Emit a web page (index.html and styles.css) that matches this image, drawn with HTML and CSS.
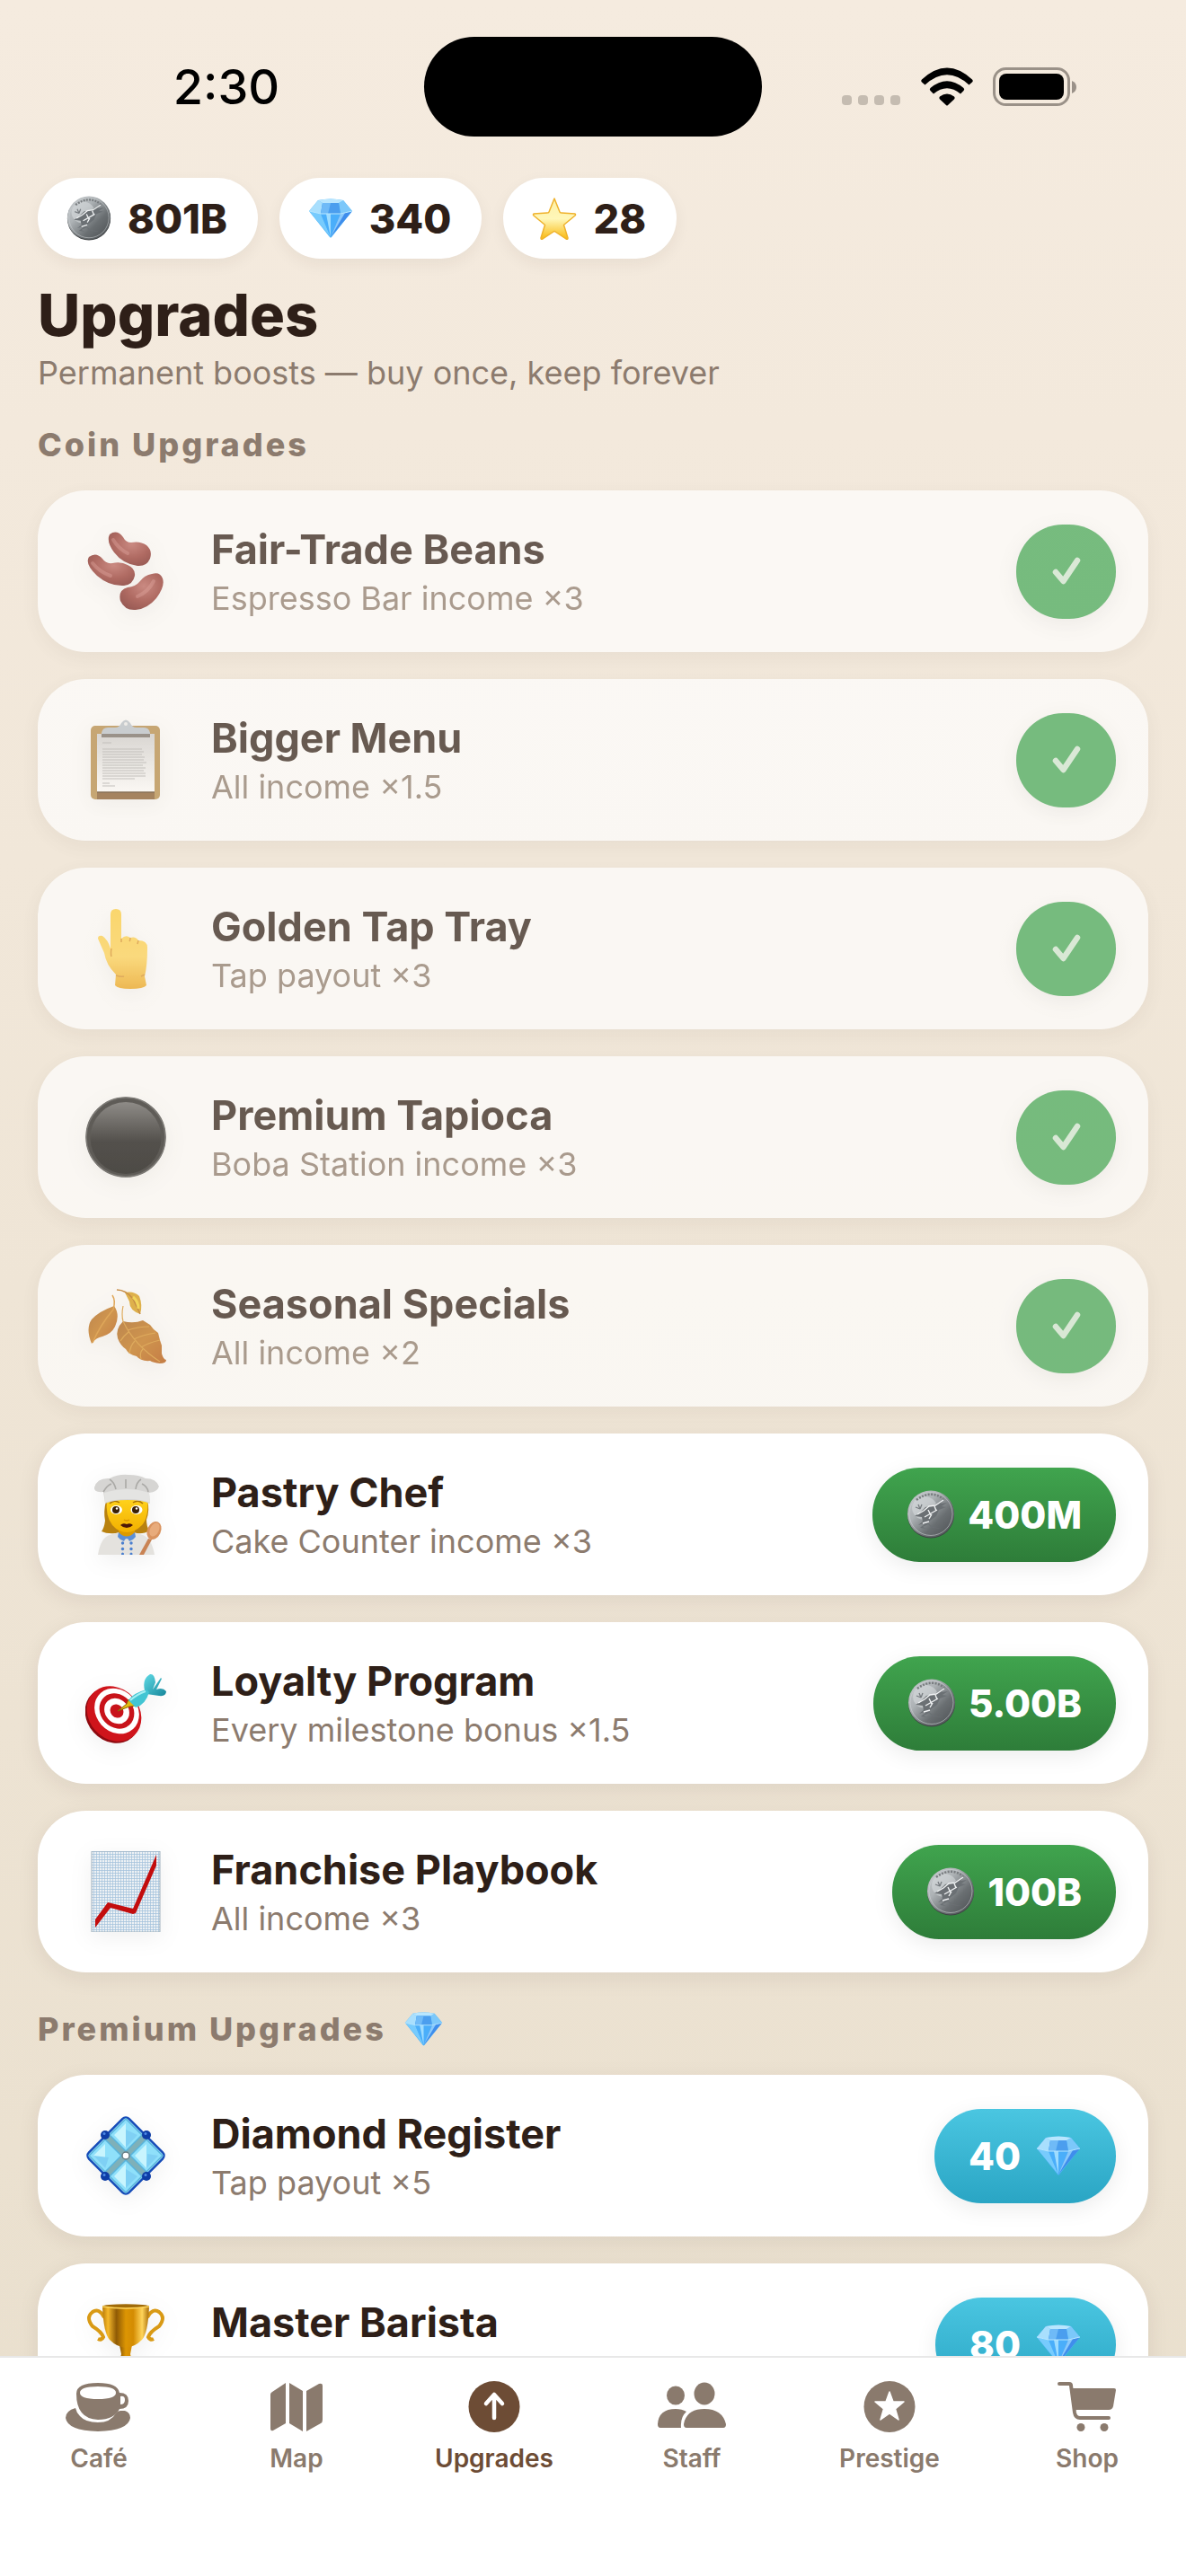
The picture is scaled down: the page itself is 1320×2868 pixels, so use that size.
FILE: index.html
```html
<!DOCTYPE html>
<html lang="en">
<head>
    <meta charset="UTF-8">
    <meta name="viewport" content="width=device-width, initial-scale=1.0">
    <title>Upgrades</title>
    <link rel="stylesheet" href="styles.css">
</head>
<body>
    <!-- shared icons -->
    <svg class="defs" aria-hidden="true">
        <defs>
            <linearGradient id="silver" x1="0" y1="0" x2="1" y2="1">
                <stop offset="0" stop-color="#c9cdd0"/>
                <stop offset="0.35" stop-color="#adb2b5"/>
                <stop offset="0.65" stop-color="#6a6f72"/>
                <stop offset="1" stop-color="#4a4e51"/>
            </linearGradient>
            <linearGradient id="starFill" x1="0" y1="0" x2="0" y2="1">
                <stop offset="0" stop-color="#fdf0a8"/>
                <stop offset="0.5" stop-color="#fff7b8"/>
                <stop offset="1" stop-color="#f9b90f"/>
            </linearGradient>
            <radialGradient id="bean" cx="0.55" cy="0.35" r="0.7">
                <stop offset="0" stop-color="#b9625c"/>
                <stop offset="0.6" stop-color="#93352f"/>
                <stop offset="1" stop-color="#74201d"/>
            </radialGradient>
            <linearGradient id="skin" x1="0" y1="0" x2="0" y2="1">
                <stop offset="0" stop-color="#ffd040"/>
                <stop offset="0.6" stop-color="#ffd457"/>
                <stop offset="1" stop-color="#eca51c"/>
            </linearGradient>
            <linearGradient id="pearl" x1="0" y1="0" x2="0" y2="1">
                <stop offset="0" stop-color="#666"/>
                <stop offset="0.55" stop-color="#121212"/>
                <stop offset="1" stop-color="#090909"/>
            </linearGradient>
            <linearGradient id="leaf" x1="0" y1="0" x2="1" y2="1">
                <stop offset="0" stop-color="#a85f14"/>
                <stop offset="0.5" stop-color="#c27316"/>
                <stop offset="1" stop-color="#b45209"/>
            </linearGradient>
            <linearGradient id="face" x1="0" y1="0" x2="0" y2="1">
                <stop offset="0" stop-color="#ffd21c"/>
                <stop offset="1" stop-color="#f2b000"/>
            </linearGradient>
            <linearGradient id="gold" x1="0" y1="0" x2="1" y2="0">
                <stop offset="0" stop-color="#b87a08"/>
                <stop offset="0.12" stop-color="#f6b92a"/>
                <stop offset="0.3" stop-color="#8f5a05"/>
                <stop offset="0.5" stop-color="#dc9503"/>
                <stop offset="0.66" stop-color="#d48c02"/>
                <stop offset="0.85" stop-color="#ffd45a"/>
                <stop offset="1" stop-color="#a86c06"/>
            </linearGradient>
            <linearGradient id="paper" x1="0" y1="0" x2="0" y2="1">
                <stop offset="0" stop-color="#cfcfcf"/>
                <stop offset="1" stop-color="#fff"/>
            </linearGradient>
            <linearGradient id="fletch" x1="0" y1="0" x2="1" y2="1">
                <stop offset="0" stop-color="#5fdbe6"/>
                <stop offset="1" stop-color="#17869a"/>
            </linearGradient>
            <pattern id="grid" width="3" height="3" patternUnits="userSpaceOnUse">
                <rect width="3" height="3" fill="#edf1f4"/>
                <path d="M0 0H3M0 0V3" stroke="#a3c2dc" stroke-width="1.4"/>
            </pattern>
            <symbol id="coin" viewBox="0 0 54 54">
                <circle cx="27" cy="27.500" r="26" fill="#3f4244"/>
                <circle cx="27" cy="26.500" r="26" fill="url(#silver)"/>
                <circle cx="27" cy="26.500" r="24" fill="none" stroke="#cfd3d5" stroke-width="0.8" opacity="0.7"/>
                <ellipse cx="20" cy="20" rx="14" ry="13" fill="#dde1e4" opacity="0.5"/>
                <path d="M11 11Q27 -1 41 10" fill="none" stroke="#777b7e" stroke-width="2.500" stroke-dasharray="2 1.500"/>
                <path d="M9 29l5-3 7-7 9-2 12-7-4 5 7-1-6 4 5 1-8 3-3 7-7 5-2 3 5 4 11 2-12-1-4-4-6 3 4 2-7-1 5-4-1-1-6 2 5-4-1-5z" fill="#6b7074"/>
                <path d="M12 27l7-4 6-5 7-1 9-6M20 30l7-4 7-4M18 37l7-2M24 22l3 6M31 18l2 5M28 27l-3 5" fill="none" stroke="#f0f2f3" stroke-width="1.400"/>
                <path d="M13 16l2 5M10 19l5 2M17 16l-2 5" stroke="#777c80" stroke-width="1.300"/>
            </symbol>
            <symbol id="gem" viewBox="0 0 50 44">
                <path d="M11 2Q25-1 39 2L49 14 26 43Q25 44 24 43L1 14z" fill="#4fb4f7"/>
                <path d="M11 2L1 14l13 3 2-12z" fill="#a9dffd"/>
                <path d="M39 2l10 12-13 3-2-12z" fill="#7cc8fa"/>
                <path d="M11 2Q25-1 39 2l-5 3H16z" fill="#b9e6fe"/>
                <path d="M16 5h18l2 12H14z" fill="#4b9eee"/>
                <path d="M16 5h9l-3 12h-8z" fill="#6fbaf7"/>
                <path d="M1 14l13 3 11 26z" fill="#77cbfd"/>
                <path d="M14 17h22L25 43z" fill="#4aaefa"/>
                <path d="M20 17h5v26z" fill="#9edcff"/>
                <path d="M49 14l-13 3-11 26z" fill="#3f8dec"/>
                <path d="M36 17l5-1-16 27z" fill="#8ac9fb"/>
                <path d="M1 14l13 3h22l13-3" fill="none" stroke="#b8e7ff" stroke-width="1"/>
            </symbol>
            <symbol id="check" viewBox="0 0 32 32">
                <path d="M4 17l8.500 10L28 4" fill="none" stroke="#fff" stroke-width="6.500" stroke-linecap="round" stroke-linejoin="round"/>
            </symbol>
        </defs>
    </svg>

    <div class="status-bar">
        <span class="clock">2:30</span>
        <span class="island"></span>
        <svg class="signals" viewBox="0 0 262 44" aria-hidden="true">
            <g fill="#c5bcb1">
                <rect x="0" y="31" width="11" height="11" rx="4"/>
                <rect x="18" y="31" width="11" height="11" rx="4"/>
                <rect x="36" y="31" width="11" height="11" rx="4"/>
                <rect x="54" y="31" width="11" height="11" rx="4"/>
            </g>
            <path d="M89 13.500Q117-12.500 145 13.500Q146.500 15 145 16.500L141.500 19.500Q117-3 92.500 19.500L89 16.500Q87.500 15 89 13.500z"/>
            <path d="M98.500 23Q117 7.500 135.500 23Q137 24.500 135.500 26L132 29.500Q117 17 102 29.500L98.500 26Q97 24.500 98.500 23z"/>
            <path d="M109 32.500Q117 26.500 125 32.500Q126.500 34 125 35.500L118 42Q117 43 116 42L109 35.500Q107.500 34 109 32.500z"/>
            <rect x="169.500" y="1.500" width="83" height="40" rx="13" fill="none" stroke="#9a9188" stroke-width="3"/>
            <rect x="175" y="7" width="72" height="29" rx="8"/>
            <path d="M256 15q5 2 5 7t-5 7z" fill="#9a9188"/>
        </svg>
    </div>

    <main class="screen">
        <div class="wallet">
            <div class="pill"><svg class="pill-icon" aria-hidden="true"><use href="#coin"/></svg>801B</div>
            <div class="pill"><svg class="pill-icon" aria-hidden="true"><use href="#gem"/></svg>340</div>
            <div class="pill">
                <svg class="pill-icon" viewBox="0 0 50 50" aria-hidden="true">
                    <path d="M25 3l6 15q0 1 2 1l15 1q1 1 0 2L36 32q-1 1 0 2l4 13q0 2-2 1L26 40q-1-1-2 0L12 48q-2 1-2-1l4-13q1-1 0-2L2 22q-1-1 0-2l15-1q2 0 2-1z" fill="url(#starFill)" stroke="#efb22c" stroke-width="1.500" stroke-linejoin="round"/>
                </svg>28
            </div>
        </div>

        <h1 class="title">Upgrades</h1>
        <p class="subtitle">Permanent boosts — buy once, keep forever</p>

        <section class="section">
            <h2 class="section-title">Coin Upgrades</h2>
            <div class="upgrade-list">
                <article class="card owned">
                    <svg class="emoji" viewBox="0 0 90 90" aria-hidden="true">
                        <path d="M27 4q8-6 15 3 3 6 9 6 10-2 17 3 7 6 4 15-4 9-14 8-16-2-26-15-9-12-5-20z" fill="url(#bean)"/>
                        <path d="M4 29q8-6 15 2 4 6 11 5 10-2 17 2 9 4 8 12-2 10-12 11-16 1-30-11Q-1 37 4 29z" fill="url(#bean)"/>
                        <path d="M74 48q9-3 12 5 3 9-7 22-10 12-23 13-12 1-17-10-3-12 8-15 9-1 13-6 6-8 14-9z" fill="url(#bean)"/>
                        <path d="M31 10q6 10 16 15M8 36q8 10 20 14M76 56q-6 12-18 17" fill="none" stroke="#d98c86" stroke-width="4" stroke-linecap="round" opacity="0.4"/>
                    </svg>
                    <div class="info">
                        <h3 class="name">Fair-Trade Beans</h3>
                        <p class="effect">Espresso Bar income ×3</p>
                    </div>
                    <button class="buy done" aria-label="Owned" disabled><svg class="check-icon" aria-hidden="true"><use href="#check"/></svg></button>
                </article>

                <article class="card owned">
                    <svg class="emoji" viewBox="0 0 90 90" aria-hidden="true">
                        <rect x="6" y="7" width="77" height="82" rx="5" fill="#b58b48"/>
                        <path d="M13 81h64v8H13z" fill="#85592c"/>
                        <path d="M13 16h64v65H13z" fill="url(#paper)"/>
                        <path d="M13 81h64" stroke="#5d4020" stroke-width="1.500"/>
                        <path d="M19 26h10M19 33h44M19 36h46M19 39h44M19 42h47M19 45h46M19 48h49M19 51h45M19 54h48M19 57h46M19 60h48M19 63h48M19 66h36M19 71h8M19 74h14" stroke="#b0b0b0" stroke-width="1.200"/>
                        <path d="M18 19v-4q1-6 7-6h8q5 0 7-5 5-7 10 0 2 5 7 5h8q6 0 7 6v4z" fill="#b9c2cb"/>
                        <path d="M18 16h54v4H18z" fill="#756e68"/>
                        <circle cx="45" cy="5" r="2" fill="#eee"/>
                    </svg>
                    <div class="info">
                        <h3 class="name">Bigger Menu</h3>
                        <p class="effect">All income ×1.5</p>
                    </div>
                    <button class="buy done" aria-label="Owned" disabled><svg class="check-icon" aria-hidden="true"><use href="#check"/></svg></button>
                </article>

                <article class="card owned">
                    <svg class="emoji" viewBox="0 0 90 90" aria-hidden="true">
                        <path d="M28 7q0-6 6-6t6 6v27q5-5 10-1 6-2 9 3 10 0 10 8 0 20-3 32l2 10q-3 4-18 4-14 0-17-4l1-12q-11-11-13-24l-7-16q0-4 5-3 6 4 9 14z" fill="url(#skin)"/>
                        <path d="M29 45q-1 6 0 9M40 34v4M50 33q0 3-1 4M59 36l-1 4M34 75q6 2 9 1M66 74l-4 2" fill="none" stroke="#d8932b" stroke-width="1.500"/>
                    </svg>
                    <div class="info">
                        <h3 class="name">Golden Tap Tray</h3>
                        <p class="effect">Tap payout ×3</p>
                    </div>
                    <button class="buy done" aria-label="Owned" disabled><svg class="check-icon" aria-hidden="true"><use href="#check"/></svg></button>
                </article>

                <article class="card owned">
                    <svg class="emoji" viewBox="0 0 90 90" aria-hidden="true">
                        <circle cx="45" cy="45" r="44.500" fill="#222"/>
                        <circle cx="45" cy="45" r="44" fill="none" stroke="#4b4b4b" stroke-width="1.500"/>
                        <ellipse cx="45" cy="46" rx="39.500" ry="40" fill="url(#pearl)"/>
                    </svg>
                    <div class="info">
                        <h3 class="name">Premium Tapioca</h3>
                        <p class="effect">Boba Station income ×3</p>
                    </div>
                    <button class="buy done" aria-label="Owned" disabled><svg class="check-icon" aria-hidden="true"><use href="#check"/></svg></button>
                </article>

                <article class="card owned">
                    <svg class="emoji" viewBox="0 0 90 90" aria-hidden="true">
                        <path d="M32 23q7 10 1 23-4 8-14 11-7 1-12 8Q0 48 7 38q8-9 25-15z" fill="url(#leaf)"/>
                        <path d="M30 11q4 6 1 16Q16 45 8 64" fill="none" stroke="#d98d26" stroke-width="1.500"/>
                        <path d="M42 40q12 3 22-1l8 5 4 5 5 4 2 8 2 6v9q2 7 5 7 0 4-7 4-8-1-11-3-10 1-15-5-9-2-12-8-6-4-9-12-3-10 6-19z" fill="url(#leaf)"/>
                        <path d="M42 23q-2 10 0 17 12 26 41 45M47 50q12-4 24-4M54 60q10-5 24-7M62 69q8-5 21-8M48 52q-6 5-9 10M55 62q-5 5-6 14M64 71q-4 4-2 11" fill="none" stroke="#d8932b" stroke-width="1.200"/>
                        <path d="M44 8q10-2 16 4 4 10 1 20-12-4-12-14z" fill="#d79b12"/>
                        <path d="M35 5q10 0 18 10l8 17" fill="none" stroke="#b5690c" stroke-width="1.500"/>
                        <path d="M53 13q6 5 6 13" fill="none" stroke="#f3cf26" stroke-width="3"/>
                    </svg>
                    <div class="info">
                        <h3 class="name">Seasonal Specials</h3>
                        <p class="effect">All income ×2</p>
                    </div>
                    <button class="buy done" aria-label="Owned" disabled><svg class="check-icon" aria-hidden="true"><use href="#check"/></svg></button>
                </article>

                <article class="card">
                    <svg class="emoji" viewBox="0 0 90 90" aria-hidden="true">
                        <path d="M23 30q-3 12-1 22-1 8-4 12 6 3 16 2h22q10 1 15-3-3-5-3-12 4-11 1-21z" fill="#b8810f"/>
                        <path d="M14 90q3-19 13-22l10-3q8 10 17 0l10 3q10 4 13 22z" fill="#e4e2de"/>
                        <path d="M37 58h18v8q-9 9-18 0z" fill="#dd9a00"/>
                        <path d="M37 65l-1 5q3 4 7 5 1-3 3-3t3 3q4-1 7-5l-1-5q-9 9-18 0z" fill="#5c8fd6"/>
                        <path d="M24 28h45q2 20-6 29-8 8-17 8t-16-8q-8-10-6-29z" fill="url(#face)"/>
                        <ellipse cx="34.500" cy="40" rx="6.500" ry="5" fill="#fff"/>
                        <ellipse cx="57" cy="40" rx="6.500" ry="5" fill="#fff"/>
                        <circle cx="34" cy="40" r="4" fill="#3a2005"/>
                        <circle cx="56" cy="40" r="4" fill="#3a2005"/>
                        <circle cx="35" cy="38.500" r="1.200" fill="#fff"/>
                        <circle cx="57" cy="38.500" r="1.200" fill="#fff"/>
                        <path d="M27 33q5-5 11-1M53 32q6-4 11 1" fill="none" stroke="#a87208" stroke-width="1.500"/>
                        <path d="M43 51q3 2 6 0" fill="none" stroke="#d59300" stroke-width="1.500"/>
                        <path d="M39 57q3-3 7-1 4-2 7 1-3 3-7 3t-7-3z" fill="#4c1708"/>
                        <path d="M22 33L20 20Q9 21 10 15 13 4 27 5 37 0 48 1q12 0 19 4 12 0 15 9-2 6-11 7l1 12q-9-4-25-4t-25 4z" fill="#d6d5d3"/>
                        <path d="M21 21q26-8 50 0l1 11q-9-4-25-4t-25 4z" fill="#e4e4e2"/>
                        <path d="M20 20q4-7 9-9M34 17Q32 9 27 6M45 16V6M56 17q1-8 6-11M70 20q-1-6-7-9" fill="none" stroke="#aaa9a6" stroke-width="1.600"/>
                        <g fill="#4a7fcf">
                            <circle cx="41.500" cy="77" r="1.700"/><circle cx="51" cy="77" r="1.700"/>
                            <circle cx="41.500" cy="83.500" r="1.700"/><circle cx="51" cy="83.500" r="1.700"/>
                            <circle cx="41.500" cy="89" r="1.500"/><circle cx="51" cy="89" r="1.500"/>
                        </g>
                        <path d="M60 90l10-18 4 1-9 17z" fill="#c98354"/>
                        <ellipse cx="76.500" cy="63" rx="7.500" ry="10.500" transform="rotate(25 76.500 63)" fill="#d9935f"/>
                        <ellipse cx="77" cy="62" rx="5" ry="8" transform="rotate(25 77 62)" fill="#e8ab7b"/>
                    </svg>
                    <div class="info">
                        <h3 class="name">Pastry Chef</h3>
                        <p class="effect">Cake Counter income ×3</p>
                    </div>
                    <button class="buy"><svg class="buy-icon" aria-hidden="true"><use href="#coin"/></svg>400M</button>
                </article>

                <article class="card">
                    <svg class="emoji" viewBox="0 0 90 90" aria-hidden="true">
                        <ellipse cx="30" cy="59" rx="28" ry="33" transform="rotate(-42 30 59)" fill="#8e0a10"/>
                        <ellipse cx="32" cy="57" rx="28" ry="33" transform="rotate(-42 32 57)" fill="#cf141b"/>
                        <ellipse cx="35" cy="54" rx="23" ry="27" transform="rotate(-42 35 54)" fill="#fff"/>
                        <ellipse cx="35" cy="54" rx="18" ry="21" transform="rotate(-42 35 54)" fill="#c8131a"/>
                        <ellipse cx="35" cy="54" rx="13" ry="15" transform="rotate(-42 35 54)" fill="#fff"/>
                        <ellipse cx="35" cy="54" rx="7" ry="8" transform="rotate(-42 35 54)" fill="#c8131a"/>
                        <path d="M36 54l10-8 2-5 8 7-7 1z" fill="#e3b912" stroke="#8c6a08" stroke-width="1"/>
                        <path d="M66 31q-3-13 6-18 5-1 6 9l-3 8 9-13 1 1-6 12q7-3 11 2 0 6-8 5l-14-2z" fill="url(#fletch)"/>
                        <path d="M48 42q5-8 20-12l3 3q-4 14-15 17z" fill="#42c5d3"/>
                        <path d="M50 42q8-7 17-10" fill="none" stroke="#a5f0f3" stroke-width="2"/>
                    </svg>
                    <div class="info">
                        <h3 class="name">Loyalty Program</h3>
                        <p class="effect">Every milestone bonus ×1.5</p>
                    </div>
                    <button class="buy"><svg class="buy-icon" aria-hidden="true"><use href="#coin"/></svg>5.00B</button>
                </article>

                <article class="card">
                    <svg class="emoji" viewBox="0 0 90 90" aria-hidden="true">
                        <rect x="7" y="0" width="76" height="90" fill="url(#grid)"/>
                        <path d="M7 0h76v90H7z" fill="none" stroke="#9fb0bd" stroke-width="1"/>
                        <path d="M11 85v-9l14-19 28 7 26-60v12L56 69l-3 1-25-7z" fill="#c30d0d"/>
                    </svg>
                    <div class="info">
                        <h3 class="name">Franchise Playbook</h3>
                        <p class="effect">All income ×3</p>
                    </div>
                    <button class="buy"><svg class="buy-icon" aria-hidden="true"><use href="#coin"/></svg>100B</button>
                </article>
            </div>
        </section>

        <section class="section">
            <h2 class="section-title">Premium Upgrades <svg class="title-icon" aria-hidden="true"><use href="#gem"/></svg></h2>
            <div class="upgrade-list">
                <article class="card">
                    <svg class="emoji" viewBox="0 0 90 90" aria-hidden="true">
                        <rect x="13.500" y="13.500" width="63" height="63" rx="5" transform="rotate(45 45 45)" fill="#a9e6f8" stroke="#164cb8" stroke-width="2.500"/>
                        <path d="M22 22l46 46M68 22L22 68" stroke="#7fb0b8" stroke-width="7"/>
                        <path d="M45 4l18 18-18 18-18-18zM45 50l18 18-18 18-18-18zM22 27l18 18-18 18L4 45zM68 27l18 18-18 18-18-18z" fill="#8fe0fa" stroke="#58b4dc" stroke-width="1.500"/>
                        <path d="M45 9v27L32 22zM45 54v27L32 68zM22 32v27L9 45zM68 32v27L55 45z" fill="#c8f5fe"/>
                        <path d="M45 36l13-14-13-6zM45 81l13-13-13-8zM9 45l13 14 4-12zM68 59l13-14-12-2z" fill="#7fd0f4"/>
                        <g fill="#0e3da6"><circle cx="22" cy="22" r="5"/><circle cx="68" cy="22" r="5"/><circle cx="22" cy="68" r="5"/><circle cx="68" cy="68" r="5"/></g>
                        <g fill="#4f8be6"><circle cx="21" cy="20.500" r="1.500"/><circle cx="67" cy="20.500" r="1.500"/><circle cx="21" cy="66.500" r="1.500"/><circle cx="67" cy="66.500" r="1.500"/></g>
                        <circle cx="45" cy="45" r="4" fill="#fff" stroke="#667d84" stroke-width="1.500"/>
                    </svg>
                    <div class="info">
                        <h3 class="name">Diamond Register</h3>
                        <p class="effect">Tap payout ×5</p>
                    </div>
                    <button class="buy premium">40<svg class="buy-icon" aria-hidden="true"><use href="#gem"/></svg></button>
                </article>

                <article class="card">
                    <svg class="emoji" viewBox="0 0 90 90" aria-hidden="true">
                        <path d="M21 15Q15 4 8 9 0 15 8 25q10 6 12 12-2 4-6 2M69 15q6-11 13-6 8 6 0 16-10 6-12 12 2 4 6 2" fill="none" stroke="#d99a15" stroke-width="4"/>
                        <path d="M38 46h14l-2 10q2 12 12 18v8H28v-8q10-6 12-18z" fill="url(#gold)"/>
                        <rect x="24" y="80" width="42" height="10" rx="2" fill="#5b3312"/>
                        <path d="M19 2q1 30 8 38 8 8 18 9 10-1 18-9 7-8 8-38z" fill="url(#gold)"/>
                        <ellipse cx="45" cy="2.500" rx="26" ry="2.200" fill="#a06a08"/>
                        <path d="M19 3q26 4 52 0" fill="none" stroke="#ffd65e" stroke-width="1.300"/>
                    </svg>
                    <div class="info">
                        <h3 class="name">Master Barista</h3>
                        <p class="effect"></p>
                    </div>
                    <button class="buy premium">80<svg class="buy-icon" aria-hidden="true"><use href="#gem"/></svg></button>
                </article>
            </div>
        </section>
    </main>

    <nav class="tab-bar">
        <a class="tab" href="#cafe">
            <svg class="tab-icon" viewBox="0 0 80 60" aria-hidden="true">
                <path d="M14 31Q3 34 3 42q2 14 36 15 34-1 36-15 0-6-6-8h-5q-3 0-5 3-6 10-20 10T19 40q-4-4-5-9z"/>
                <path fill-rule="evenodd" d="M15 15Q15 3 39 3q22 0 24 11 10 0 10 9t-10 9q-6 12-24 12Q15 43 15 15zm4-1q0 7 20 7t20-7-20-7-20 7zm45 4v9q5 0 5-5t-5-4z"/>
            </svg>
            Café
        </a>
        <a class="tab" href="#map">
            <svg class="tab-icon" viewBox="0 0 80 60" aria-hidden="true">
                <path d="M28 3v45L14 56q-3 1-3-2V16q0-2 2-3zM32 3l15 9v45l-15-9zM51 12l14-8q4-1 4 2v38q0 3-2 4l-16 9z"/>
            </svg>
            Map
        </a>
        <a class="tab active" href="#upgrades" aria-current="page">
            <svg class="tab-icon" viewBox="0 0 80 60" aria-hidden="true">
                <circle cx="40" cy="29.500" r="28.500"/>
                <path d="M40 42V18M31 26l9-10 9 10" fill="none" stroke="#fff" stroke-width="4.500" stroke-linecap="round" stroke-linejoin="round"/>
            </svg>
            Upgrades
        </a>
        <a class="tab" href="#staff">
            <svg class="tab-icon" viewBox="0 0 80 60" aria-hidden="true">
                <ellipse cx="22" cy="17" rx="10" ry="10.500"/>
                <ellipse cx="54" cy="15" rx="11.500" ry="12.500"/>
                <path d="M2 49q1-17 20-17 7 0 12 3-7 6-6 18H5q-3 0-3-4zM31 49q3-17 23-17t24 17q0 4-3 4H34q-3 0-3-4z"/>
            </svg>
            Staff
        </a>
        <a class="tab" href="#prestige">
            <svg class="tab-icon" viewBox="0 0 80 60" aria-hidden="true">
                <circle cx="40" cy="29.500" r="28.500"/>
                <path d="M40 13l4 11h12L46.500 32 50 44l-10-7-10 7 3.500-12L24 24h12z" fill="#fff" stroke="#fff" stroke-width="1.500" stroke-linejoin="round"/>
            </svg>
            Prestige
        </a>
        <a class="tab" href="#shop">
            <svg class="tab-icon" viewBox="0 0 80 60" aria-hidden="true">
                <path d="M9 4h11q2 0 2 2l4 30q1 6 6 6h32" fill="none" stroke="currentColor" stroke-width="4" stroke-linecap="round" stroke-linejoin="round"/>
                <path d="M22 9h48q2 0 2 2l-3 18q-1 4-5 4H26z"/>
                <circle cx="33" cy="52.500" r="4.500"/>
                <circle cx="59" cy="52.500" r="4.500"/>
            </svg>
            Shop
        </a>
    </nav>
</body>
</html>
```

FILE: styles.css
```css
* {
    box-sizing: border-box;
}

body {
    font-family: 'Inter', sans-serif;
    margin: 0;
    height: 100vh;
    display: flex;
    flex-direction: column;
    color: #2e1f18;
    background: linear-gradient(#f5ebdf, #e9dfcd);
    overflow: hidden;
}

h1, h2, h3, p {
    margin: 0;
}

.defs {
    position: absolute;
    width: 0;
    height: 0;
}

/* status bar */
.status-bar {
    display: grid;
    grid-template-columns: 1fr 376px 1fr;
    align-items: center;
    justify-items: center;
    padding: 41px 32px 0;
}

.clock {
    font-size: 54px;
    line-height: 64px;
    font-weight: 500;
    color: #000;
}

.island {
    width: 100%;
    height: 111px;
    border-radius: 56px;
    background: #000;
}

.signals {
    width: 262px;
    height: 44px;
}

/* content */
.screen {
    flex: 1;
    min-height: 0;
    overflow-y: auto;
    scrollbar-width: none;
    padding: 46px 42px 30px;
}

.wallet {
    display: flex;
    gap: 24px;
}

.pill {
    display: flex;
    align-items: center;
    gap: 18px;
    height: 90px;
    padding: 0 34px 0 32px;
    border-radius: 45px;
    background: #fff;
    font-size: 45px;
    font-weight: 800;
    box-shadow: 0 6px 18px rgba(46, 31, 23, 0.06);
}

.pill-icon {
    width: 50px;
    height: 50px;
}

.title {
    margin-top: 23px;
    font-size: 65px;
    line-height: 80px;
    font-weight: 800;
}

.subtitle {
    margin-top: 2px;
    font-size: 36px;
    line-height: 44px;
    color: #8c7b6e;
}

.section + .section {
    padding-top: 5px;
}

.section-title {
    display: flex;
    align-items: center;
    gap: 12px;
    margin: 36px 0 29px;
    font-size: 36px;
    line-height: 44px;
    font-weight: 800;
    letter-spacing: 3px;
    color: #8c7b6e;
}

.title-icon {
    width: 43px;
    height: 38px;
    margin-left: 8px;
}

.upgrade-list {
    display: flex;
    flex-direction: column;
    gap: 30px;
}

.card {
    display: flex;
    align-items: center;
    height: 180px;
    padding: 0 36px 0 53px;
    border-radius: 54px;
    background: #fff;
    box-shadow: 0 6px 24px rgba(46, 31, 23, 0.08);
}

.card.owned {
    opacity: 0.7;
}

.emoji {
    flex: none;
    width: 90px;
    height: 90px;
    filter: drop-shadow(0 6px 12px rgba(0, 0, 0, 0.06));
}

.info {
    flex: 1;
    margin-left: 50px;
}

.name {
    font-size: 45px;
    line-height: 54px;
    font-weight: 700;
}

.effect {
    margin-top: 5px;
    min-height: 44px;
    font-size: 36px;
    line-height: 44px;
    color: #8c7b6e;
}

.buy {
    display: flex;
    align-items: center;
    justify-content: center;
    gap: 14px;
    height: 105px;
    padding: 0 38px;
    border: none;
    border-radius: 52px;
    background: linear-gradient(#40a44e, #2e7d39);
    color: #fff;
    font-family: inherit;
    font-size: 42px;
    font-weight: 800;
    box-shadow: 0 6px 24px rgba(0, 0, 0, 0.08);
    cursor: pointer;
}

.buy-icon {
    width: 54px;
    height: 54px;
}

.buy.premium {
    gap: 16px;
    background: linear-gradient(#4ac6e1, #2aa5c4);
}

.premium .buy-icon {
    width: 52px;
    height: 44px;
}

.buy.done {
    width: 111px;
    padding: 0;
    background: #43a958;
    cursor: default;
}

.check-icon {
    width: 32px;
    height: 32px;
    opacity: 0.75;
}

/* bottom tabs */
.tab-bar {
    display: grid;
    grid-template-columns: repeat(6, 1fr);
    height: 245px;
    padding-top: 25px;
    border-top: 2px solid #e8e8e8;
    background: #fff;
}

.tab {
    display: flex;
    flex-direction: column;
    align-items: center;
    gap: 10px;
    font-size: 28px;
    line-height: 34px;
    font-weight: 600;
    color: #8a7a6d;
    text-decoration: none;
}

.tab.active {
    color: #6d4c35;
}

.tab-icon {
    width: 80px;
    height: 60px;
    fill: currentColor;
}
```
